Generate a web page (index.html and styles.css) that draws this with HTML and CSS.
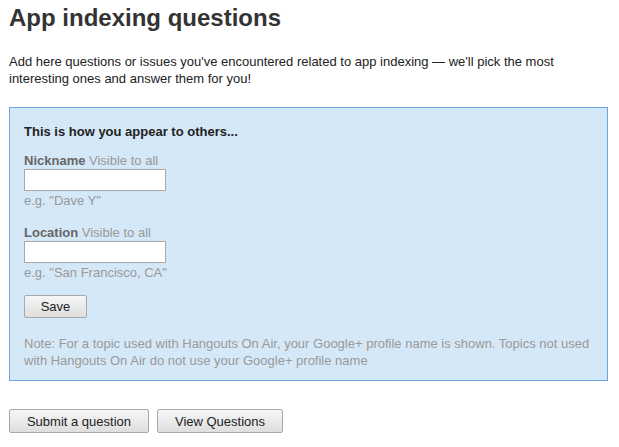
FILE: index.html
```html
<!DOCTYPE html>
<html>
<head>
<meta charset="utf-8">
<link rel="stylesheet" href="styles.css">
</head>
<body>
<div class="page">
  <h1 class="title">App indexing questions</h1>
  <p class="intro">Add here questions or issues you've encountered related to app indexing — we'll pick the most interesting ones and answer them for you!</p>
  <div class="panel">
    <div class="panel-head">This is how you appear to others...</div>
    <div class="field">
      <div class="label"><b>Nickname</b> Visible to all</div>
      <input class="text-input" type="text">
      <div class="hint">e.g. "Dave Y"</div>
    </div>
    <div class="field field-second">
      <div class="label"><b>Location</b> Visible to all</div>
      <input class="text-input" type="text">
      <div class="hint">e.g. "San Francisco, CA"</div>
    </div>
    <button class="btn btn-save">Save</button>
    <div class="note">Note: For a topic used with Hangouts On Air, your Google+ profile name is shown. Topics not used with Hangouts On Air do not use your Google+ profile name</div>
  </div>
  <div class="actions">
    <button class="btn btn-submit">Submit a question</button>
    <button class="btn btn-view">View Questions</button>
  </div>
</div>
</body>
</html>
```

FILE: styles.css
```css
html, body {
  margin: 0;
  padding: 0;
  background: #fff;
}
body {
  font-family: "Liberation Sans", Arial, sans-serif;
  font-size: 13px;
  color: #222;
}
.page {
  padding: 4px 10px 0 9px;
}
.title {
  margin: 0;
  font-size: 24px;
  line-height: 27px;
  font-weight: bold;
  color: #333;
}
.intro {
  margin: 22px 0 0 0;
  line-height: 17px;
  color: #222;
}
.panel {
  margin-top: 20px;
  width: 568px;
  border: 1px solid #6aa6e6;
  background: #d5e8f8;
  padding: 15px 15px 11px 14px;
}
.panel-head {
  font-weight: bold;
  line-height: 17px;
  color: #222;
}
.field {
  margin-top: 12px;
}
.field-second {
  margin-top: 15px;
}
.label {
  line-height: 17px;
  color: #999;
}
.label b {
  color: #666;
}
.text-input {
  display: block;
  box-sizing: border-box;
  width: 142px;
  height: 22px;
  margin: 0;
  border: 1px solid #a9a9a9;
  background: #fff;
  padding: 0 3px;
  font: inherit;
}
.hint {
  margin-top: 1px;
  line-height: 17px;
  color: #999;
}
.btn {
  display: inline-block;
  box-sizing: border-box;
  margin: 0;
  padding: 0;
  font-family: "Liberation Sans", Arial, sans-serif;
  font-size: 13px;
  color: #222;
  border: 1px solid #a9a9a9;
  border-radius: 2px;
  background: linear-gradient(#f6f6f6, #dedede);
}
.btn-save {
  display: block;
  margin-top: 14px;
  width: 63px;
  height: 23px;
}
.note {
  margin-top: 17px;
  line-height: 17px;
  color: #999;
}
.actions {
  margin-top: 28px;
  display: flex;
  gap: 8px;
}
.btn-submit {
  width: 140px;
  height: 24px;
}
.btn-view {
  width: 126px;
  height: 24px;
}
```
